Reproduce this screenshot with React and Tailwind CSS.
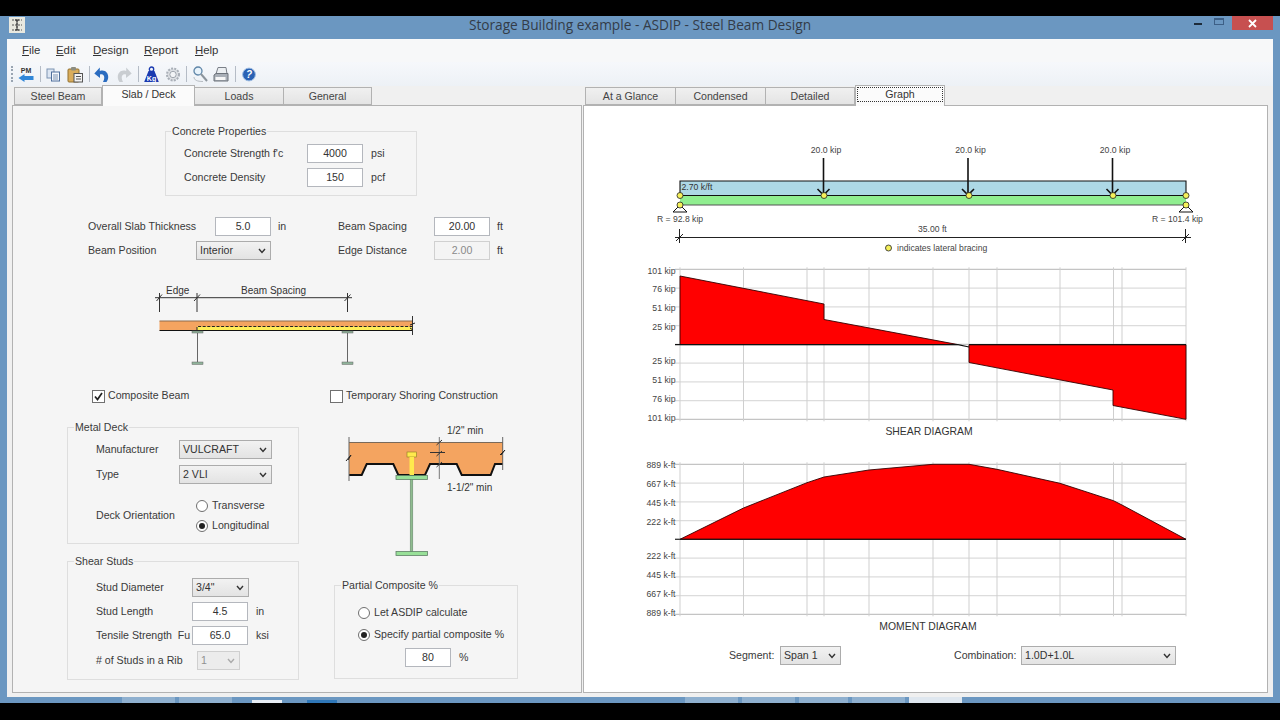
import React from "react";

const Lbl = ({ w, children, cls = "" }) => (
  <span className={`inline-block shrink-0 whitespace-nowrap ${cls}`} style={w ? { width: w } : undefined}>{children}</span>
);

const Input = ({ value, w = "w-[56px]", disabled = false }) => (
  <div className={`${w} h-[19px] shrink-0 border flex items-center justify-center ${disabled ? "border-[#d0d0d0] bg-[#f4f4f4] text-[#8a8a8a]" : "border-[#b4b7bd] bg-white text-[#333]"}`}>{value}</div>
);

const Chevron = ({ color = "#333" }) => (
  <svg width="8" height="6" viewBox="0 0 8 6" className="shrink-0"><path d="M1 1 L4 4.5 L7 1" fill="none" stroke={color} strokeWidth="1.4" /></svg>
);

const Select = ({ value, w, disabled = false }) => (
  <div className={`${w} h-[19px] shrink-0 border flex items-center justify-between pl-[3px] pr-[4px] ${disabled ? "border-[#cfcfcf] bg-[#ececec] text-[#909090]" : "border-[#acacac] bg-gradient-to-b from-[#f2f2f2] to-[#e3e3e3] text-[#333]"}`}>
    <span>{value}</span>
    <Chevron color={disabled ? "#aaa" : "#333"} />
  </div>
);

const Radio = ({ on }) => (
  <span className="w-[12px] h-[12px] shrink-0 rounded-full border border-[#6f6f6f] bg-white flex items-center justify-center">
    {on && <span className="w-[6px] h-[6px] rounded-full bg-[#222]" />}
  </span>
);

const Check = ({ on }) => (
  <span className="w-[13px] h-[13px] shrink-0 border border-[#707070] bg-white flex items-center justify-center">
    {on && (
      <svg width="11" height="11" viewBox="0 0 11 11"><path d="M2 5.5 L4.5 8.5 L9 2" fill="none" stroke="#222" strokeWidth="1.7" /></svg>
    )}
  </span>
);

const Tab = ({ label, w, active, focus }) => (
  <div
    className={`${w} shrink-0 flex items-center justify-center border border-[#b2b2b2] ${active ? "h-[21px] -mb-[1px] pb-[3px] border-b-0 bg-[#fbfbfb] z-10 relative text-[#333]" : "h-[18px] pt-[1px] -ml-[1px] first:ml-0 bg-gradient-to-b from-[#f0f0f0] to-[#e4e4e4] text-[#444]"}`}
  >
    <span className={focus ? "border border-dotted border-[#333] w-[86px] text-center leading-[13px]" : ""}>{label}</span>
  </div>
);

const Sep = ({ ml }) => <span className={`w-px h-[16px] bg-[#b5bcc6] shrink-0 ${ml}`} />;

const ToolIcon = ({ w = 16, cls = "", children }) => (
  <svg width={w} height="17" viewBox={`0 0 ${w} 17`} className={`shrink-0 ${cls}`}>{children}</svg>
);

const Toolbar = () => (
  <div className="h-[24px] flex items-center pl-[4px]">
    <span className="w-[2px] h-[16px] border-l-2 border-dotted border-[#9aa5b2] shrink-0" />
    <ToolIcon w={16} cls="ml-[5px]">
      <text x="8" y="6.5" textAnchor="middle" fontSize="7" fontWeight="700" fill="#333" fontFamily="Liberation Sans">PM</text>
      <path d="M0.5 12 L6.5 8 L6.5 10 L15.5 10 L15.5 14 L6.5 14 L6.5 16 Z" fill="#2f86d8" />
    </ToolIcon>
    <Sep ml="ml-[6px]" />
    <ToolIcon w={14} cls="ml-[5px]">
      <rect x="1" y="3" width="7" height="9" fill="#dce6f3" stroke="#7d93b2" />
      <rect x="5.5" y="6" width="8" height="9" fill="#f5f8fc" stroke="#4f6f9c" />
      <path d="M7 9h5M7 11h5M7 13h5" stroke="#7d93b2" />
    </ToolIcon>
    <ToolIcon w={16} cls="ml-[7px]">
      <rect x="1" y="3" width="11" height="13" rx="1" fill="#d9ad5c" stroke="#93712f" />
      <rect x="4" y="1" width="5" height="3.5" rx="1" fill="#8d8d80" />
      <rect x="7" y="7.5" width="8.5" height="8.5" fill="#f3f3f3" stroke="#555" />
      <path d="M9 10.5h5M9 13h5" stroke="#555" />
    </ToolIcon>
    <Sep ml="ml-[6px]" />
    <ToolIcon w={16} cls="ml-[4px]">
      <path d="M12.5 16 C16.8 10 12.5 2.5 5.8 5 L5.8 1.5 L0.3 7.5 L6 12 L6 8.5 C10 7 11.6 11.5 9 16 Z" fill="#2a6cc0" />
    </ToolIcon>
    <ToolIcon w={16} cls="ml-[6px]">
      <path d="M3.5 16 C-0.8 10 3.5 2.5 10.2 5 L10.2 1.5 L15.7 7.5 L10 12 L10 8.5 C6 7 4.4 11.5 7 16 Z" fill="#c9cdd1" />
    </ToolIcon>
    <Sep ml="ml-[6px]" />
    <ToolIcon w={15} cls="ml-[5px]">
      <path d="M4.5 5 L10.5 5 L14.8 16 L0.2 16 Z" fill="#1a3ab0" />
      <circle cx="7.5" cy="3.2" r="2.2" fill="none" stroke="#1a3ab0" strokeWidth="1.3" />
      <text x="7.5" y="14.5" textAnchor="middle" fontSize="7" fontWeight="700" fill="#fff" fontFamily="Liberation Sans">Kg</text>
    </ToolIcon>
    <ToolIcon w={16} cls="ml-[6px]">
      <circle cx="8" cy="8.5" r="6" fill="#dde0e4" stroke="#a9afb7" strokeWidth="2" strokeDasharray="2 1.2" />
      <circle cx="8" cy="8.5" r="3.2" fill="#f2f4f6" stroke="#a0a6ae" />
    </ToolIcon>
    <Sep ml="ml-[5px]" />
    <ToolIcon w={15} cls="ml-[6px]">
      <circle cx="5" cy="5" r="4" fill="#e8f3fb" stroke="#5f86a8" strokeWidth="1.3" />
      <path d="M8 8 L14 15" stroke="#8b949c" strokeWidth="2" />
      <path d="M1 11 C1 14 4 15.5 10 15.5" stroke="#b6bcc2" fill="none" />
    </ToolIcon>
    <ToolIcon w={16} cls="ml-[5px]">
      <path d="M5 1.5 H13 L14 8 H3 Z" fill="#eceff2" stroke="#7b8088" />
      <path d="M1 9 L3 7.5 H15 V15 H1 Z" fill="#a9afb7" stroke="#6d737b" />
      <rect x="2.5" y="11" width="10" height="3" fill="#f7f7f7" />
    </ToolIcon>
    <Sep ml="ml-[6px]" />
    <ToolIcon w={14} cls="ml-[6px]">
      <circle cx="7" cy="8.5" r="6.4" fill="#2a62b4" stroke="#9dbce2" />
      <text x="7" y="12" textAnchor="middle" fontSize="10" fontWeight="700" fontStyle="italic" fill="#fff" fontFamily="Liberation Sans">?</text>
    </ToolIcon>
  </div>
);

const SlabDiagram = () => (
  <svg viewBox="130 280 300 90" className="w-[300px] h-[90px] block ml-[117px] mt-[20px]" fontFamily="Liberation Sans" fontSize="10" fill="#333">
    <text x="166" y="293.5">Edge</text>
    <text x="241" y="293.5">Beam Spacing</text>
    <path d="M155 297.7H352M159.5 293V312M197 293V312M347.5 293V312" stroke="#333" fill="none" />
    <path d="M156.5 301L162 294.5M194 301L200 294.5M344.5 301L350.5 294.5" stroke="#333" fill="none" />
    <rect x="159.5" y="321" width="253" height="9.5" fill="#f4a460" />
    <path d="M159.5 321H412.5" stroke="#8c6a4c" />
    <rect x="197" y="326.5" width="215.5" height="3.5" fill="#ffee58" />
    <path d="M197 330V326.5H412.5" stroke="#222" strokeDasharray="3 1.6" fill="none" />
    <path d="M159.5 330.5H412.5" stroke="#111" />
    <path d="M412.5 316V335" stroke="#333" />
    <path d="M410 325L415 323M410 328L413 330" stroke="#222" />
    {[197.5, 347.5].map((x) => (
      <g key={x}>
        <rect x={x - 5.5} y="331" width="11" height="2" fill="#8fb39a" stroke="#666" strokeWidth="0.5" />
        <path d={`M${x} 333V362`} stroke="#666" />
        <rect x={x - 5.5} y="362" width="11" height="2.5" fill="#8fb39a" stroke="#666" strokeWidth="0.5" />
      </g>
    ))}
  </svg>
);

const DeckDiagram = () => (
  <svg viewBox="340 425 170 135" className="w-[170px] h-[135px] block ml-[6px] mt-[6px]" fontFamily="Liberation Sans" fontSize="10" fill="#333">
    <path d="M349 443.5H503V465H495L490.7 476H461.7L456.7 465H430L425 476H398.3L393.3 465H366.7L361.7 476H349Z" fill="#f4a460" />
    <path d="M349 443.5H503" stroke="#7a6a5a" />
    <path d="M349 476H361.7L366.7 465H393.3L398.3 476H425L430 465H456.7L461.7 476H490.7L495 465H503" fill="none" stroke="#111" strokeWidth="2" />
    <path d="M349 438V482M502.7 438V471" stroke="#666" />
    <path d="M346 462L351 456L348 461M500 456L505 451L501 456" stroke="#222" fill="none" />
    <rect x="407" y="453" width="9.5" height="5" fill="#ffe94d" stroke="#8a7a20" strokeWidth="0.6" />
    <rect x="409.5" y="458" width="4.5" height="18" fill="#ffe94d" />
    <rect x="396" y="476.5" width="31.5" height="4" fill="#98e098" stroke="#5f7f66" strokeWidth="0.8" />
    <rect x="410.2" y="480.5" width="2.6" height="72" fill="#8fbc8f" stroke="#5f7f66" strokeWidth="0.5" />
    <rect x="396" y="552.5" width="31.5" height="4" fill="#98e098" stroke="#5f7f66" strokeWidth="0.8" />
    <path d="M439.3 438V480" stroke="#777" />
    <path d="M430 453.5H445M436.5 446L442 441M436.5 457L442 452M436.5 468L442 463" stroke="#333" fill="none" />
    <text x="447" y="435">1/2" min</text>
    <text x="447" y="492">1-1/2" min</text>
  </svg>
);

const hs = [0, 1, 2, 3, 4, 5, 6, 7, 8];
const vs = [680, 743.5, 807, 824, 869, 933, 969, 997, 1060, 1113.5, 1122, 1186];

const Grid = ({ y0, step }) => (
  <g>
    {hs.map((i) => (
      <path key={i} d={`M675 ${y0 + i * step}H1186`} stroke={i % 4 === 0 ? "#c4c4c4" : "#dcdcdc"} strokeWidth="1.2" />
    ))}
    {vs.map((x) => (
      <path key={x} d={`M${x} ${y0 - 2}V${y0 + 8 * step + 2}`} stroke="#cfcfcf" />
    ))}
  </g>
);

const YLabels = ({ y0, step, labels }) => (
  <g fontSize="8.7" fill="#444" textAnchor="end">
    {[...labels, null, ...[...labels].reverse()].map((l, i) =>
      l ? <text key={i} x="675.5" y={y0 + i * step + 3 - (i > 4 ? 4 : 0)}>{l}</text> : null
    )}
  </g>
);

const Load = ({ x }) => (
  <g>
    <text x={x + 2.5} y="153" textAnchor="middle" fontSize="8.7" fill="#444">20.0 kip</text>
    <path d={`M${x} 158V194`} stroke="#111" strokeWidth="1.6" />
    <path d={`M${x - 6} 189L${x} 195L${x + 6} 189`} stroke="#111" strokeWidth="1.6" fill="none" />
  </g>
);

const Dot = ({ x, y }) => <circle cx={x} cy={y} r="3" fill="#f5f05a" stroke="#222" strokeWidth="0.8" />;

const Support = ({ x }) => <path d={`M${x} 205L${x + 7} 212H${x - 7}Z`} fill="#fff" stroke="#111" />;

const GraphSvg = () => (
  <svg viewBox="640 135 570 505" className="w-[570px] h-[505px] block ml-[56px]" fontFamily="Liberation Sans">
    <rect x="680" y="181" width="506" height="14.5" fill="#add8e6" />
    <rect x="680" y="195.5" width="506" height="9.5" fill="#90ee90" />
    <path d="M680 195.5V181H1186V195.5" fill="none" stroke="#111" strokeWidth="1.1" />
    <path d="M680 195.5H1186" stroke="#111" />
    <path d="M680 205H1186" stroke="#555" />
    <text x="681.5" y="190" fontSize="8.7" fill="#333">2.70 k/ft</text>
    <Load x={823.5} /><Load x={968} /><Load x={1112.5} />
    <Support x={680} /><Support x={1186} />
    <Dot x={680} y={195.5} /><Dot x={680} y={205} />
    <Dot x={824} y={195.5} /><Dot x={969} y={195.5} /><Dot x={1113} y={195.5} />
    <Dot x={1186} y={195.5} /><Dot x={1186} y={205} />
    <text x="657" y="222" fontSize="8.6" fill="#444">R = 92.8 kip</text>
    <text x="1152" y="222" fontSize="8.6" fill="#444">R = 101.4 kip</text>
    <text x="918" y="232" fontSize="8.6" fill="#444">35.00 ft</text>
    <path d="M675 237.5H1191M679.5 229V243M1185.5 229V243M676 241L683 234M1182 241L1189 234" stroke="#222" fill="none" />
    <circle cx="888.5" cy="248" r="3" fill="#f5f05a" stroke="#222" strokeWidth="0.8" />
    <text x="897" y="251" fontSize="8.6" fill="#444">indicates lateral bracing</text>

    <Grid y0={269.3} step={18.75} />
    <YLabels y0={270.5} step={18.9} labels={["101 kip", "76 kip", "51 kip", "25 kip"]} />
    <path d="M680 344.6V276L824 304V319.5L958 344.6Z" fill="#ff0000" stroke="#300" strokeWidth="0.9" />
    <path d="M969 344.6V362.5L1113 390V405.5L1186 419.3V344.6Z" fill="#ff0000" stroke="#300" strokeWidth="0.9" />
    <path d="M675 344.6H958M958 344.6L969 347M969 344.6H1186" stroke="#111" strokeWidth="1.1" fill="none" />
    <text x="929" y="435" textAnchor="middle" fontSize="10.4" fill="#333">SHEAR DIAGRAM</text>

    <Grid y0={464.3} step={18.75} />
    <YLabels y0={465.3} step={18.9} labels={["889 k-ft", "667 k-ft", "445 k-ft", "222 k-ft"]} />
    <path d="M680 539.3L743.5 508L807 482.7L824 477L869 470L933 464.3H969L997 469.3L1060 483.3L1113.5 500.7L1122 505L1186 539.3Z" fill="#ff0000" stroke="#300" strokeWidth="0.9" />
    <path d="M675 539.3H1186" stroke="#111" strokeWidth="1.1" />
    <text x="928" y="630" textAnchor="middle" fontSize="10.4" fill="#333">MOMENT DIAGRAM</text>
  </svg>
);

const titleIcon = (
  <svg width="16" height="16" viewBox="0 0 16 16" className="shrink-0 ml-[9px]">
    <rect width="16" height="16" fill="#e9e9e0" />
    <path d="M3 3H13M3 13H13M8 3V13M3 8H13" stroke="#555" strokeDasharray="2 1" fill="none" />
    <path d="M6 3H10M6 13H10M8 3V13" stroke="#333" fill="none" />
  </svg>
);

export default function App() {
  return (
    <div className="w-[1280px] h-[720px] overflow-hidden bg-black flex flex-col text-[10.6px] text-[#3a3a3a] font-['Liberation_Sans',sans-serif]">
      <div className="h-[16px] shrink-0 bg-black" />
      <div className="h-[23px] shrink-0 bg-[#6b97c1] flex items-start relative">
        <div className="mt-[1px]">{titleIcon}</div>
        <div className="flex-1 text-center text-[13.7px] leading-[18px] text-[#333c48] font-['Open_Sans',sans-serif] pl-[61px]">Storage Building example - ASDIP - Steel Beam Design</div>
        <div className="flex items-start h-full mr-[7px] shrink-0">
          <span className="w-[8px] h-[2px] bg-[#1d2b3a] mt-[7px] mr-[12px]" />
          <span className="w-[10px] h-[7px] border border-[#3d5f86] border-t-2 mt-[2px] mr-[8px]" />
          <span className="w-[41px] h-[14px] bg-[#c75050] flex items-center justify-center">
            <svg width="9" height="9" viewBox="0 0 9 9"><path d="M1 1L8 8M8 1L1 8" stroke="#fff" strokeWidth="1.8" /></svg>
          </span>
        </div>
      </div>
      <div className="flex-1 min-h-0 bg-[#6b97c1] px-[7px] pb-[5px] flex flex-col">
        <div className="w-[1266px] h-[658px] bg-[#f0f0f0] flex flex-col shrink-0">
          <div className="h-[23px] shrink-0 bg-[#f7f8f9] flex items-center pl-[15px] text-[#333] text-[11.4px]">
            <span className="w-[34px]"><u>F</u>ile</span>
            <span className="w-[37px]"><u>E</u>dit</span>
            <span className="w-[51px]"><u>D</u>esign</span>
            <span className="w-[51px]"><u>R</u>eport</span>
            <span><u>H</u>elp</span>
          </div>
          <div className="h-[24px] shrink-0 bg-gradient-to-b from-[#f6f8fb] to-[#edf1f6]"><Toolbar /></div>
          <div className="h-[19px] shrink-0 flex pl-[5px] items-end">
            <div className="w-[570px] flex items-end">
              <div className="w-[2px]" />
              <div className="flex items-end">
                <Tab label="Steel Beam" w="w-[88px]" />
                <Tab label="Slab / Deck" w="w-[93px]" active />
                <Tab label="Loads" w="w-[90px]" />
                <Tab label="General" w="w-[89px]" />
              </div>
            </div>
            <div className="flex items-end ml-[3px]">
              <Tab label="At a Glance" w="w-[91px]" />
              <Tab label="Condensed" w="w-[91px]" />
              <Tab label="Detailed" w="w-[90px]" />
              <Tab label="Graph" w="w-[90px]" active focus />
            </div>
          </div>
          <div className="flex h-[588px] shrink-0 pl-[5px]">
            <div className="w-[570px] h-full border border-[#b2b2b2] bg-[#f5f5f5] flex flex-col">
              <fieldset className="ml-[152px] mt-[19px] w-[252px] h-[71px] border border-[#dedede] pl-[18px]">
                <legend className="ml-[-13px] px-[1px] leading-[13px]">Concrete Properties</legend>
                <div className="flex items-center h-[19px] mt-[6px]">
                  <Lbl w={123}>Concrete Strength f'c</Lbl><Input value="4000" /><span className="ml-2">psi</span>
                </div>
                <div className="flex items-center h-[19px] mt-[5px]">
                  <Lbl w={123}>Concrete Density</Lbl><Input value="150" /><span className="ml-2">pcf</span>
                </div>
              </fieldset>
              <div className="flex items-center h-[19px] ml-[75px] mt-[21px]">
                <Lbl w={127}>Overall Slab Thickness</Lbl><Input value="5.0" /><span className="ml-[7px] w-[60px]">in</span>
                <Lbl w={96}>Beam Spacing</Lbl><Input value="20.00" /><span className="ml-[7px]">ft</span>
              </div>
              <div className="flex items-center h-[19px] ml-[75px] mt-[5px]">
                <Lbl w={108}>Beam Position</Lbl><Select value="Interior" w="w-[75px]" /><span className="w-[67px]" />
                <Lbl w={96}>Edge Distance</Lbl><Input value="2.00" disabled /><span className="ml-[7px]">ft</span>
              </div>
              <SlabDiagram />
              <div className="flex items-center h-[14px] ml-[79px] mt-[19px]">
                <Check on /><span className="ml-[3px] w-[222px]">Composite Beam</span>
                <Check /><span className="ml-[3px]">Temporary Shoring Construction</span>
              </div>
              <div className="flex ml-[54px] mt-[15px] gap-[35px]">
                <div className="w-[232px] flex flex-col mt-[3px]">
                  <fieldset className="h-[123px] border border-[#dedede] pl-[28px]">
                    <legend className="ml-[-22px] px-[1px] leading-[13px]">Metal Deck</legend>
                    <div className="flex items-center h-[19px] mt-[6px]">
                      <Lbl w={83}>Manufacturer</Lbl><Select value="VULCRAFT" w="w-[93px]" />
                    </div>
                    <div className="flex items-center h-[19px] mt-[6px]">
                      <Lbl w={83}>Type</Lbl><Select value="2 VLI" w="w-[93px]" />
                    </div>
                    <div className="flex items-center mt-[15px]">
                      <Lbl w={100}>Deck Orientation</Lbl>
                      <div className="flex flex-col gap-[6px]">
                        <div className="flex items-center gap-[4px] h-[14px]"><Radio /><span>Transverse</span></div>
                        <div className="flex items-center gap-[4px] h-[14px]"><Radio on /><span>Longitudinal</span></div>
                      </div>
                    </div>
                  </fieldset>
                  <fieldset className="h-[125px] mt-[11px] border border-[#dedede] pl-[28px]">
                    <legend className="ml-[-22px] px-[1px] leading-[13px]">Shear Studs</legend>
                    <div className="flex items-center h-[19px] mt-[10px]">
                      <Lbl w={96}>Stud Diameter</Lbl><Select value={'3/4"'} w="w-[57px]" />
                    </div>
                    <div className="flex items-center h-[19px] mt-[5px]">
                      <Lbl w={96}>Stud Length</Lbl><Input value="4.5" /><span className="ml-2">in</span>
                    </div>
                    <div className="flex items-center h-[19px] mt-[5px]">
                      <Lbl w={96}>Tensile Strength&nbsp; Fu</Lbl><Input value="65.0" /><span className="ml-2">ksi</span>
                    </div>
                    <div className="flex items-center h-[19px] mt-[6px]">
                      <Lbl w={101}># of Studs in a Rib</Lbl><Select value="1" w="w-[43px]" disabled />
                    </div>
                  </fieldset>
                </div>
                <div className="w-[184px] flex flex-col">
                  <DeckDiagram />
                  <fieldset className="h-[100px] mt-[20px] border border-[#dedede] pl-[23px]">
                    <legend className="ml-[-17px] px-[1px] leading-[13px]">Partial Composite %</legend>
                    <div className="flex items-center gap-[4px] mt-[14px] h-[14px]"><Radio /><span>Let ASDIP calculate</span></div>
                    <div className="flex items-center gap-[4px] mt-[8px] h-[14px]"><Radio on /><span>Specify partial composite %</span></div>
                    <div className="flex items-center ml-[47px] mt-[6px]"><Input value="80" w="w-[46px]" /><span className="ml-2">%</span></div>
                  </fieldset>
                </div>
              </div>
            </div>
            <div className="w-[685px] h-full ml-[1px] border border-[#b2b2b2] bg-white flex flex-col">
              <div className="mt-[29px]"><GraphSvg /></div>
              <div className="flex items-center h-[19px] ml-[145px] mt-[6px]">
                <Lbl w={51}>Segment:</Lbl><Select value="Span 1" w="w-[61px]" />
                <span className="w-[113px]" />
                <Lbl w={67}>Combination:</Lbl><Select value="1.0D+1.0L" w="w-[155px]" />
              </div>
            </div>
          </div>
        </div>
        <div className="flex-1 relative flex items-end">
          <div className="flex h-[6px] items-start mt-auto pl-[115px] w-full">
            <span className="w-[53px] h-full bg-[#8fb0cf]" />
            <span className="w-[53px] h-full bg-[#8fb0cf] ml-[4px]" />
            <span className="w-[30px] h-[3px] bg-[#e8eef5] ml-[20px] mt-[3px]" />
            <span className="w-[30px] h-[3px] bg-[#2f77b8] ml-[25px] mt-[3px]" />
            <span className="w-[53px] h-full bg-[#8fb0cf] ml-[348px]" />
            <span className="w-[53px] h-full bg-[#8fb0cf] ml-[4px]" />
            <span className="w-[49px] h-full bg-[#8fb0cf] ml-[4px]" />
            <span className="w-[53px] h-full bg-[#8fb0cf] ml-[4px]" />
            <span className="w-[53px] h-full bg-[#dfe7ef] ml-[4px]" />
          </div>
        </div>
      </div>
      <div className="h-[17px] shrink-0 bg-black" />
    </div>
  );
}
